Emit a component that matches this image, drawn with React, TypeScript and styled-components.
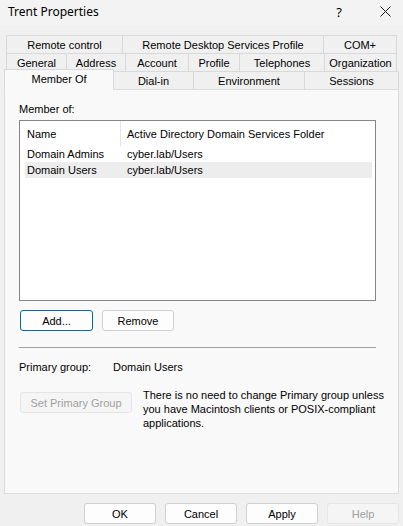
import React from 'react'
import styled, { createGlobalStyle, css } from 'styled-components'

const GlobalStyle = createGlobalStyle`
    html, body {
        margin: 0;
        padding: 0;
        background: #f0f0f0;
    }
    body {
        font-family: "Liberation Sans", Arial, sans-serif;
        font-size: 11px;
        color: #000;
    }
`

const Window = styled.div`
    width: 403px;
    height: 526px;
    background: #f0f0f0;
    display: flex;
    flex-direction: column;
`

const TitleBar = styled.div`
    height: 25px;
    background: #f3f3f3;
    display: flex;
    align-items: center;
    padding-left: 8px;
    padding-bottom: 2px;
    box-sizing: border-box;
`

const Title = styled.div`
    flex: 1;
    font-family: "Noto Sans", "Open Sans", sans-serif;
    font-size: 12px;
`

const TitleButton = styled.div<{ $w: number }>`
    width: ${(p) => p.$w}px;
    display: flex;
    justify-content: center;
    align-items: center;
    font-family: "Noto Sans", sans-serif;
    font-size: 13px;
`

const Tabs = styled.div`
    margin-top: 10px;
    display: flex;
    flex-direction: column;
`

const TabRow = styled.div<{ $indent: number }>`
    display: flex;
    height: 18px;
    padding-left: ${(p) => p.$indent}px;
`

const Tab = styled.div<{ $w: number; $active?: boolean }>`
    width: ${(p) => p.$w}px;
    box-sizing: border-box;
    display: flex;
    justify-content: center;
    align-items: center;
    border: 1px solid #d9d9d9;
    border-bottom: none;
    margin-right: -1px;
    background: #f0f0f0;
    white-space: nowrap;
    ${(p) =>
        p.$active &&
        css`
            background: #f9f9f9;
            height: 21px;
            margin-top: -2px;
            margin-bottom: -1px;
            align-items: flex-start;
            padding-top: 3px;
            position: relative;
            z-index: 1;
        `}
`

const Panel = styled.div`
    margin: 0 4px;
    height: 405px;
    box-sizing: border-box;
    border: 1px solid #dcdcdc;
    background: #f9f9f9;
    padding: 12px 22px 0 14px;
    display: flex;
    flex-direction: column;
`

const Label = styled.div`
    height: 14px;
    line-height: 14px;
`

const ListBox = styled.div`
    margin-top: 4px;
    height: 181px;
    box-sizing: border-box;
    border: 1px solid #868686;
    background: #fff;
    display: flex;
    flex-direction: column;
`

const ListHeader = styled.div`
    display: grid;
    grid-template-columns: 100px 1fr;
    height: 25px;
    align-items: center;
    margin-left: 1px;
`

const HeaderCell = styled.div<{ $sep?: boolean }>`
    padding-left: 6px;
    height: 100%;
    display: flex;
    align-items: center;
    box-sizing: border-box;
    border-right: ${(p) => (p.$sep ? '1px solid #e5e5e5' : 'none')};
`

const ListRow = styled.div<{ $selected?: boolean }>`
    display: grid;
    grid-template-columns: 100px 1fr;
    height: 16px;
    align-items: center;
    margin: 0 3px 0 5px;
    background: ${(p) => (p.$selected ? '#ededed' : 'transparent')};
`

const Cell = styled.div`
    padding-left: 2px;
    white-space: nowrap;
`

const ButtonRow = styled.div`
    display: flex;
    gap: 9px;
    margin-top: 9px;
    padding-left: 1px;
`

const Button = styled.button<{ $w: number; $focused?: boolean }>`
    flex: none;
    width: ${(p) => p.$w}px;
    height: 21px;
    box-sizing: border-box;
    font-family: "Liberation Sans", Arial, sans-serif;
    font-size: 11px;
    color: #000;
    background: #fdfdfd;
    border: 1px solid ${(p) => (p.$focused ? '#0067c0' : '#d0d0d0')};
    border-radius: 3px;
    padding: 0;
    white-space: nowrap;
    &:disabled {
        color: #a0a0a0;
        background: #f5f5f5;
        border-color: #e5e5e5;
    }
`

const Separator = styled.div`
    margin-top: 16px;
    height: 1px;
    background: #a0a0a0;
`

const InfoRow = styled.div`
    display: flex;
    margin-top: 12px;
    height: 14px;
    line-height: 14px;
`

const InfoLabel = styled.div`
    width: 94px;
`

const PrimaryRow = styled.div`
    display: flex;
    gap: 11px;
    margin-top: 18px;
    padding-left: 1px;
`

const Note = styled.div`
    flex: none;
    line-height: 14px;
    margin-top: -4px;
    width: 250px;
`

const Footer = styled.div`
    display: flex;
    justify-content: flex-end;
    gap: 9px;
    padding: 9px 4px 0 0;
`

const row1 = [
    { t: 'Remote control', w: 117 },
    { t: 'Remote Desktop Services Profile', w: 202 },
    { t: 'COM+', w: 74 },
]
const row2 = [
    { t: 'General', w: 61 },
    { t: 'Address', w: 60 },
    { t: 'Account', w: 64 },
    { t: 'Profile', w: 52 },
    { t: 'Telephones', w: 86 },
    { t: 'Organization', w: 73 },
]
const row3 = [
    { t: 'Member Of', w: 110, active: true },
    { t: 'Dial-in', w: 81 },
    { t: 'Environment', w: 112 },
    { t: 'Sessions', w: 95 },
]

const App = () => {
    return (
        <Window>
            <GlobalStyle />
            <TitleBar>
                <Title>Trent Properties</Title>
                <TitleButton $w={56}>?</TitleButton>
                <TitleButton $w={36}>
                    <svg width="11" height="11" viewBox="0 0 11 11">
                        <path d="M0.5 0.5 L10.5 10.5 M10.5 0.5 L0.5 10.5" stroke="#1a1a1a" strokeWidth="1" fill="none" />
                    </svg>
                </TitleButton>
            </TitleBar>
            <Tabs>
                <TabRow $indent={6}>
                    {row1.map((t) => (
                        <Tab key={t.t} $w={t.w}>{t.t}</Tab>
                    ))}
                </TabRow>
                <TabRow $indent={6}>
                    {row2.map((t) => (
                        <Tab key={t.t} $w={t.w}>{t.t}</Tab>
                    ))}
                </TabRow>
                <TabRow $indent={4}>
                    {row3.map((t) => (
                        <Tab key={t.t} $w={t.w} $active={t.active}>{t.t}</Tab>
                    ))}
                </TabRow>
            </Tabs>
            <Panel>
                <Label>Member of:</Label>
                <ListBox>
                    <ListHeader>
                        <HeaderCell $sep>Name</HeaderCell>
                        <HeaderCell>Active Directory Domain Services Folder</HeaderCell>
                    </ListHeader>
                    <ListRow>
                        <Cell>Domain Admins</Cell>
                        <Cell>cyber.lab/Users</Cell>
                    </ListRow>
                    <ListRow $selected>
                        <Cell>Domain Users</Cell>
                        <Cell>cyber.lab/Users</Cell>
                    </ListRow>
                </ListBox>
                <ButtonRow>
                    <Button $w={73} $focused>Add...</Button>
                    <Button $w={72}>Remove</Button>
                </ButtonRow>
                <Separator />
                <InfoRow>
                    <InfoLabel>Primary group:</InfoLabel>
                    <div>Domain Users</div>
                </InfoRow>
                <PrimaryRow>
                    <Button $w={112} disabled>Set Primary Group</Button>
                    <Note>
                        There is no need to change Primary group unless you have Macintosh clients or POSIX-compliant
                        applications.
                    </Note>
                </PrimaryRow>
            </Panel>
            <Footer>
                <Button $w={72}>OK</Button>
                <Button $w={72}>Cancel</Button>
                <Button $w={72}>Apply</Button>
                <Button $w={72} disabled>Help</Button>
            </Footer>
        </Window>
    )
}

export default App
